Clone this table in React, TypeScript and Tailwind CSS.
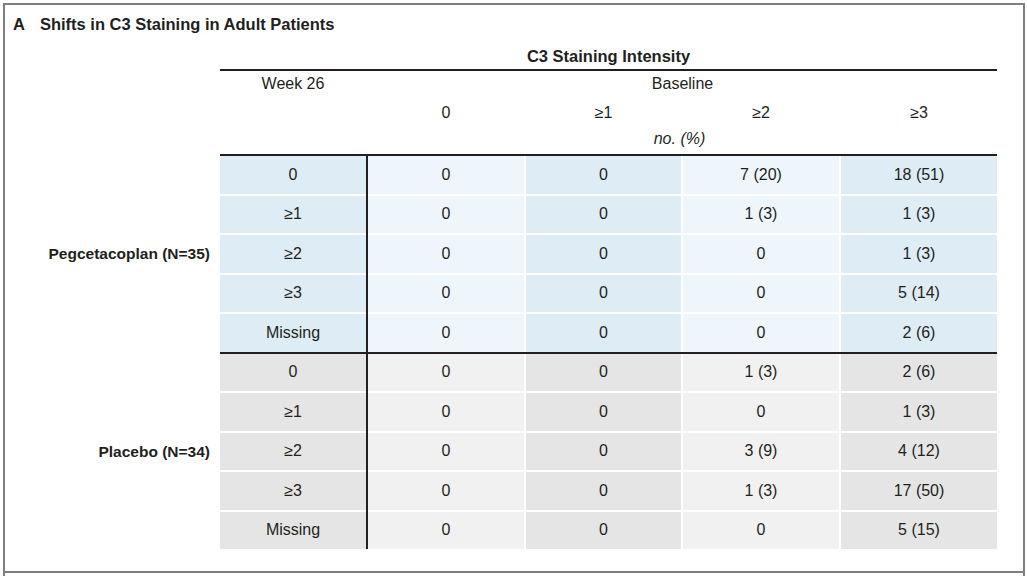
import React from "react";

type Group = {
  label: string;
  dark: string;
  light: string;
  rows: { week: string; values: string[] }[];
};

const groups: Group[] = [
  {
    label: "Pegcetacoplan (N=35)",
    dark: "bg-[#deecf6]",
    light: "bg-[#eef6fc]",
    rows: [
      { week: "0", values: ["0", "0", "7 (20)", "18 (51)"] },
      { week: "≥1", values: ["0", "0", "1 (3)", "1 (3)"] },
      { week: "≥2", values: ["0", "0", "0", "1 (3)"] },
      { week: "≥3", values: ["0", "0", "0", "5 (14)"] },
      { week: "Missing", values: ["0", "0", "0", "2 (6)"] },
    ],
  },
  {
    label: "Placebo (N=34)",
    dark: "bg-[#e5e5e5]",
    light: "bg-[#f1f1f2]",
    rows: [
      { week: "0", values: ["0", "0", "1 (3)", "2 (6)"] },
      { week: "≥1", values: ["0", "0", "0", "1 (3)"] },
      { week: "≥2", values: ["0", "0", "3 (9)", "4 (12)"] },
      { week: "≥3", values: ["0", "0", "1 (3)", "17 (50)"] },
      { week: "Missing", values: ["0", "0", "0", "5 (15)"] },
    ],
  },
];

const colWidths = ["w-[156px]", "w-[155px]", "w-[156px]", "w-[156px]"];

function Cell({ text, bg }: { text: string; bg: string }) {
  return (
    <div className={`h-[37.5px] flex items-center justify-center ${bg}`}>
      {text}
    </div>
  );
}

function GroupBlock({ group }: { group: Group }) {
  return (
    <div className="flex">
      <div className="w-[215px] flex items-center justify-end pr-[10px] text-[15.5px] font-bold">
        {group.label}
      </div>
      <div className="w-[146px] flex flex-col gap-[2px]">
        {group.rows.map((r, i) => (
          <Cell key={i} text={r.week} bg={group.dark} />
        ))}
      </div>
      <div className="w-[2px] bg-[#231f20]" />
      <div className="flex gap-[2px]">
        {colWidths.map((w, c) => (
          <div key={c} className={`${w} flex flex-col gap-[2px]`}>
            {group.rows.map((r, i) => (
              <Cell
                key={i}
                text={r.values[c]}
                bg={c % 2 === 0 ? group.light : group.dark}
              />
            ))}
          </div>
        ))}
      </div>
    </div>
  );
}

export default function App() {
  return (
    <div className="w-[1027px] h-[576px] overflow-hidden bg-white font-['Liberation_Sans',Arial,sans-serif] text-[16px] text-[#231f20]">
      <div className="mt-[3px] ml-[3px] w-[1022px] h-[600px] border-x-2 border-t-2 border-[#7f7f7f]">
        <div className="h-[566px] flex flex-col">
          {/* title */}
          <div className="h-[39px] flex items-center pl-[8px] text-[16.5px] font-bold leading-none">
            <span>A</span>
            <span className="ml-[15px]">Shifts in C3 Staining in Adult Patients</span>
          </div>

          {/* table header */}
          <div className="ml-[215px] w-[777px] flex flex-col">
            <div className="h-[25px] flex items-center justify-center text-[16.5px] font-bold">
              C3 Staining Intensity
            </div>
            <div className="h-[2px] bg-[#231f20]" />
            <div className="h-[25px] flex items-center">
              <div className="w-[146px] text-center">Week 26</div>
              <div className="w-[2px]" />
              <div className="flex-1 text-center">Baseline</div>
            </div>
            <div className="h-[34px] flex items-center">
              <div className="w-[148px]" />
              <div className="flex gap-[2px]">
                {["0", "≥1", "≥2", "≥3"].map((h, i) => (
                  <div key={i} className={`${colWidths[i]} text-center`}>
                    {h}
                  </div>
                ))}
              </div>
            </div>
            <div className="h-[18px] flex items-center">
              <div className="w-[148px]" />
              <div className="flex-1 text-center italic pr-[6px]">no. (%)</div>
            </div>
            <div className="h-[6px]" />
            <div className="h-[2px] bg-[#231f20]" />
          </div>

          {/* body */}
          <GroupBlock group={groups[0]} />
          <div className="ml-[215px] w-[777px] h-[2px] bg-[#231f20]" />
          <GroupBlock group={groups[1]} />
        </div>
        <div className="h-[2px] bg-[#7f7f7f]" />
      </div>
    </div>
  );
}
